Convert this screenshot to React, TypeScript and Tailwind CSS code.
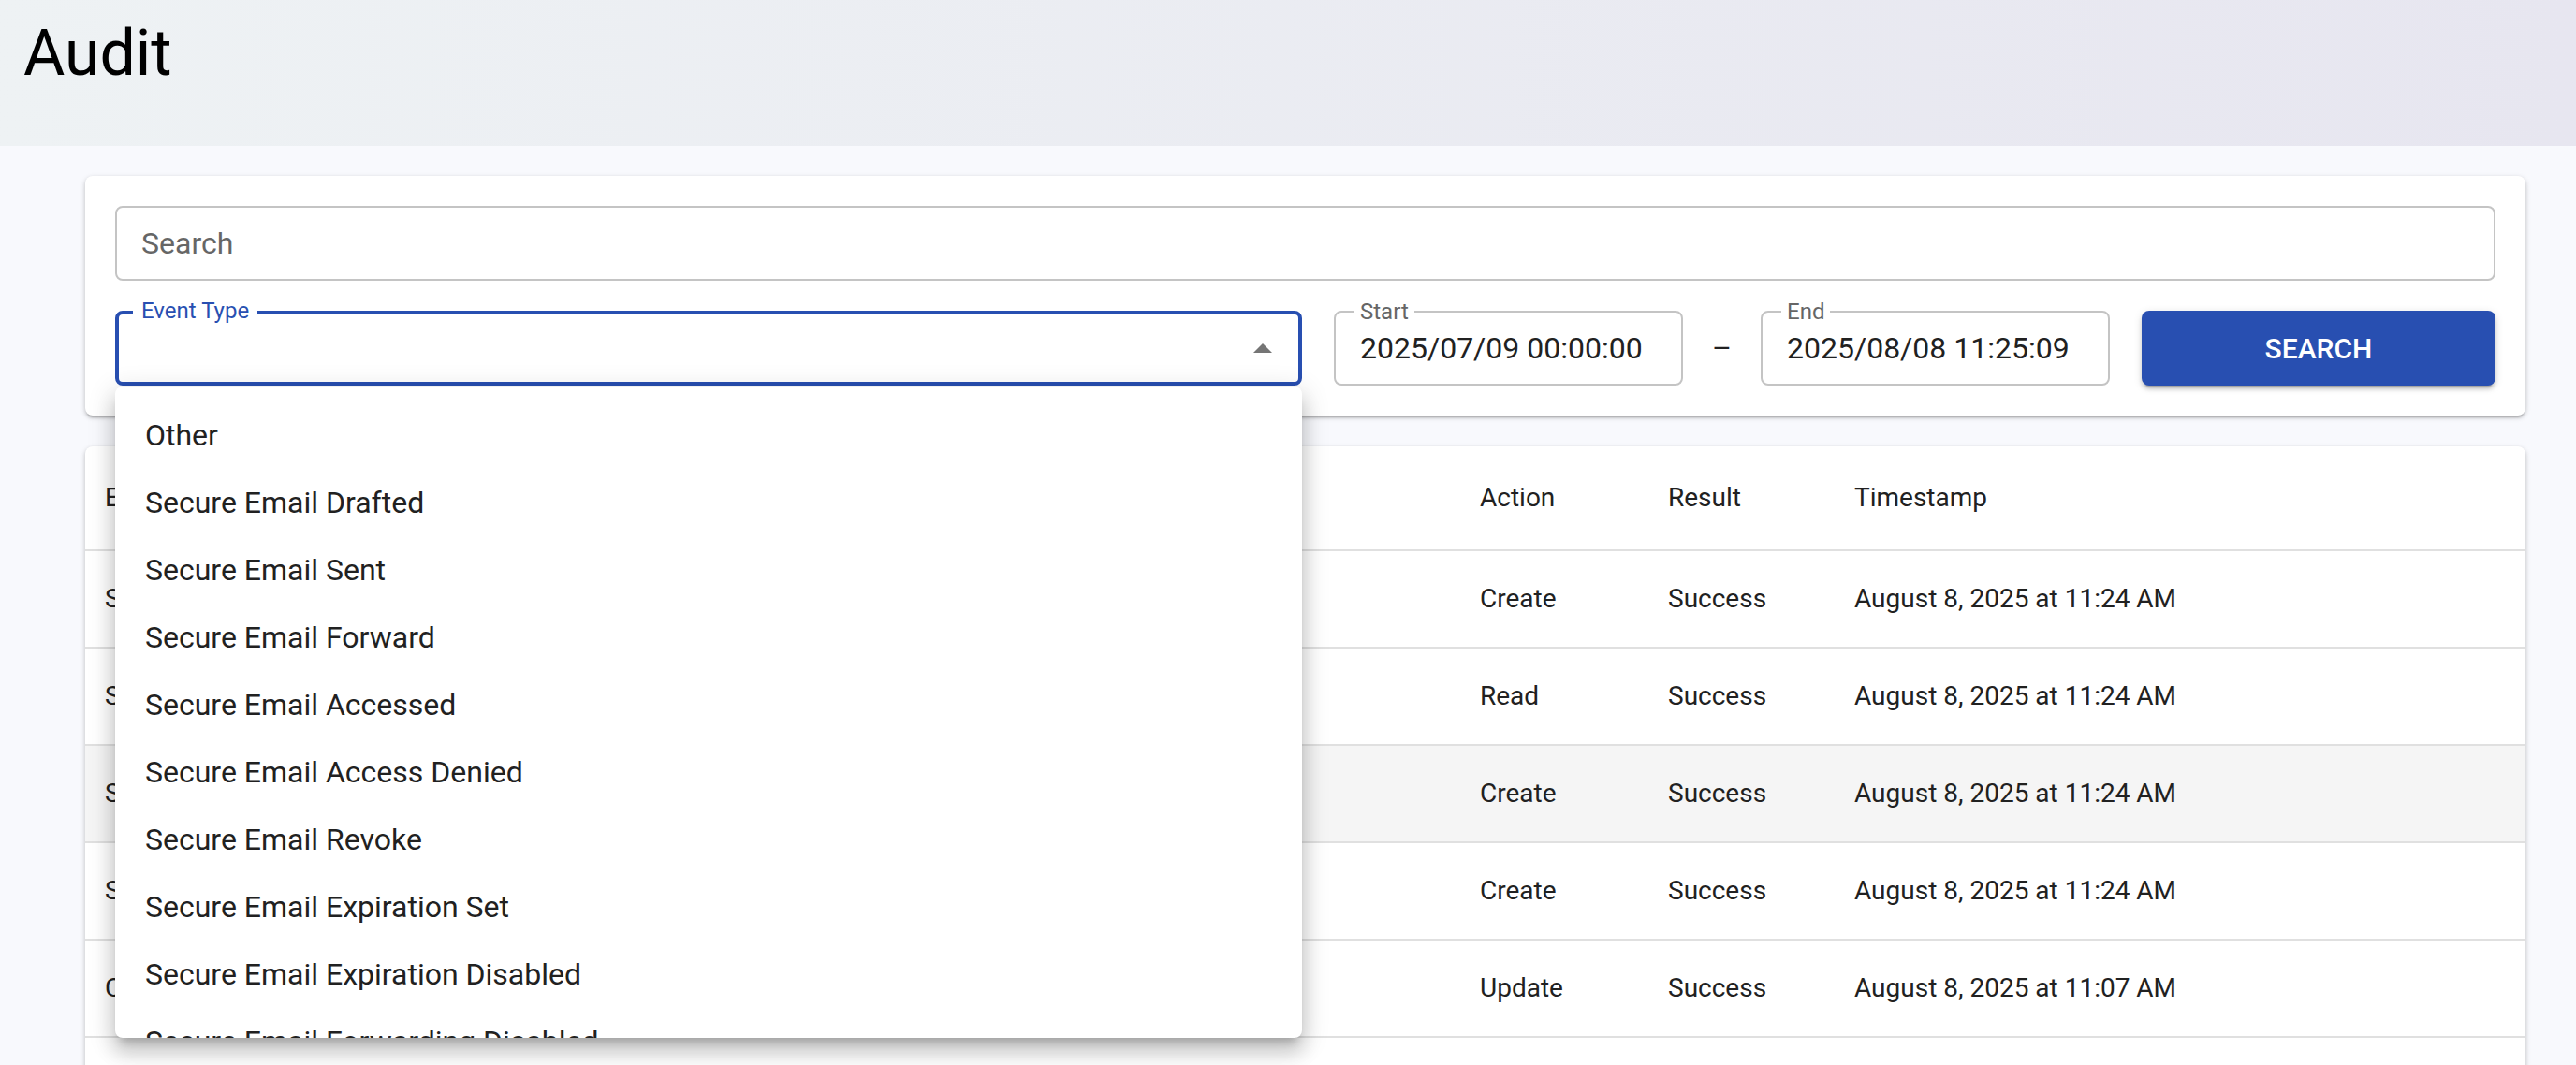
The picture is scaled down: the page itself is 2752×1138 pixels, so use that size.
import React from 'react';

const eventTypes = [
  'Other',
  'Secure Email Drafted',
  'Secure Email Sent',
  'Secure Email Forward',
  'Secure Email Accessed',
  'Secure Email Access Denied',
  'Secure Email Revoke',
  'Secure Email Expiration Set',
  'Secure Email Expiration Disabled',
  'Secure Email Forwarding Disabled',
  'Secure Email Forwarding Enabled',
];

const rows = [
  { event: 'Secure Email Drafted', action: 'Create', result: 'Success', time: 'August 8, 2025 at 11:24 AM' },
  { event: 'Secure Email Accessed', action: 'Read', result: 'Success', time: 'August 8, 2025 at 11:24 AM' },
  { event: 'Secure Email Sent', action: 'Create', result: 'Success', time: 'August 8, 2025 at 11:24 AM', hover: true },
  { event: 'Secure Email Expiration Set', action: 'Create', result: 'Success', time: 'August 8, 2025 at 11:24 AM' },
  { event: 'Company Settings Updated', action: 'Update', result: 'Success', time: 'August 8, 2025 at 11:07 AM' },
  { event: 'Secure Email Drafted', action: 'Create', result: 'Success', time: 'August 8, 2025 at 10:52 AM' },
];

const DateField = ({ label, value }: { label: string; value: string }) => (
  <div className="relative w-[373px] h-[80px] shrink-0 rounded-[8px] border-2 border-[#c4c4c4] flex items-center pl-[26px]">
    <span className="absolute -top-[15px] left-[20px] bg-white px-[6px] text-[24px] leading-[28px] text-[#666666]">
      {label}
    </span>
    <span className="text-[32px] leading-none text-[#212121]">{value}</span>
  </div>
);

export default function App() {
  return (
    <div className="relative w-[2752px] h-[1138px] overflow-hidden bg-[#f8f9fd] font-['Roboto',sans-serif]">
      {/* header */}
      <div className="h-[156px] bg-gradient-to-r from-[#eef2f4] to-[#e7e6f0] pl-[25px] pt-[23px]">
        <h1 className="text-[68px] leading-none font-normal text-black">Audit</h1>
      </div>

      <div className="pl-[91px] pr-[54px] pt-[32px]">
        {/* filters */}
        <div className="relative z-10 bg-white rounded-[8px] p-[32px] flex flex-col gap-[32px] shadow-[0_4px_2px_-2px_rgba(0,0,0,0.2),0_2px_4px_0_rgba(0,0,0,0.14),0_2px_6px_0_rgba(0,0,0,0.12)]">
          <div className="h-[80px] rounded-[8px] border-2 border-[#c4c4c4] flex items-center pl-[26px]">
            <span className="text-[32px] leading-none text-[#666666]">Search</span>
          </div>

          <div className="flex items-center h-[80px]">
            {/* event type select, focused and open */}
            <div className="relative flex-1 h-[80px]">
              <div className="h-full rounded-[8px] border-[4px] border-[#284fb1] flex items-center justify-end pr-[28px]">
                <svg width="20" height="10" viewBox="0 0 20 10">
                  <path d="M0 10 L10 0 L20 10 Z" fill="#757575" />
                </svg>
              </div>
              <span className="absolute -top-[14px] left-[19px] bg-white px-[9px] text-[24px] leading-[28px] text-[#284fb1]">
                Event Type
              </span>

              <div className="absolute left-0 top-[81px] w-full h-[696px] overflow-hidden bg-white rounded-[8px] pt-[16px] shadow-[0_10px_10px_-6px_rgba(0,0,0,0.2),0_16px_20px_2px_rgba(0,0,0,0.14),0_6px_28px_4px_rgba(0,0,0,0.12)]">
                {eventTypes.map((t) => (
                  <div key={t} className="h-[72px] flex items-center pl-[32px] text-[32px] text-[#212121]">
                    {t}
                  </div>
                ))}
              </div>
            </div>

            <div className="w-[34px] shrink-0" />
            <DateField label="Start" value="2025/07/09 00:00:00" />
            <div className="w-[83px] shrink-0 flex justify-center text-[32px] text-[#212121]">–</div>
            <DateField label="End" value="2025/08/08 11:25:09" />
            <div className="w-[34px] shrink-0" />

            <button className="w-[378px] h-[80px] shrink-0 rounded-[8px] bg-[#284fb1] text-white text-[30px] font-medium shadow-[0_6px_2px_-4px_rgba(0,0,0,0.2),0_4px_4px_0_rgba(0,0,0,0.14),0_2px_10px_0_rgba(0,0,0,0.12)]">
              SEARCH
            </button>
          </div>
        </div>

        {/* table */}
        <div className="mt-[33px] bg-white rounded-[8px] shadow-[0_4px_2px_-2px_rgba(0,0,0,0.2),0_2px_4px_0_rgba(0,0,0,0.14),0_2px_6px_0_rgba(0,0,0,0.12)]">
          <div className="grid grid-cols-[1469px_201px_199px_1fr] h-[112px] items-center border-b-2 border-[#e0e0e0] pl-[21px] text-[28px] text-[#212121]">
            <div>Event Type</div>
            <div>Action</div>
            <div>Result</div>
            <div>Timestamp</div>
          </div>
          {rows.map((r, i) => (
            <div
              key={i}
              className={
                r.hover
                  ? 'grid grid-cols-[1469px_201px_199px_1fr] h-[104px] items-center border-b-2 border-[#e0e0e0] pl-[21px] text-[28px] text-[#212121] bg-[#f5f5f5]'
                  : 'grid grid-cols-[1469px_201px_199px_1fr] h-[104px] items-center border-b-2 border-[#e0e0e0] pl-[21px] text-[28px] text-[#212121]'
              }
            >
              <div>{r.event}</div>
              <div>{r.action}</div>
              <div>{r.result}</div>
              <div>{r.time}</div>
            </div>
          ))}
        </div>
      </div>
    </div>
  );
}
